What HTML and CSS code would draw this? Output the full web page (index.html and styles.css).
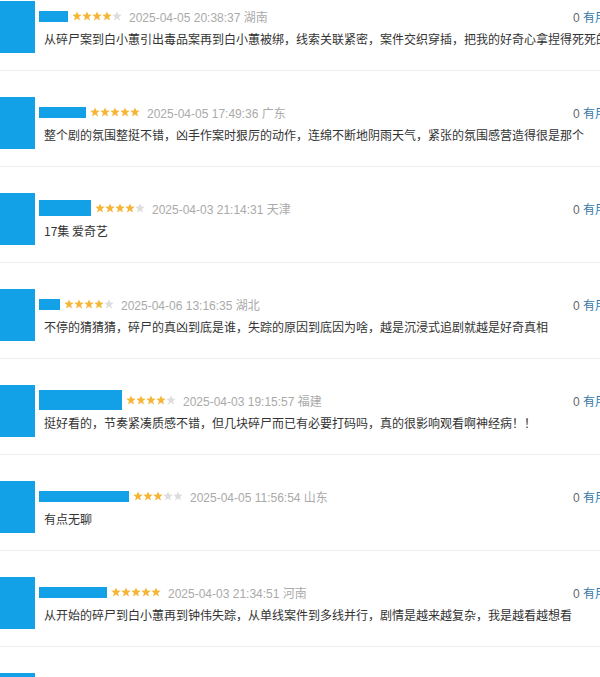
FILE: index.html
```html
<!DOCTYPE html>
<html lang="zh-CN">
<head>
    <meta charset="UTF-8">
    <meta name="viewport" content="width=device-width, initial-scale=1.0">
    <title>短评</title>
    <link rel="stylesheet" href="styles.css">
</head>
<body>
    <svg width="0" height="0" class="defs">
        <symbol id="star" viewBox="0 0 10 10">
            <polygon points="5,0.4 6.3,3.6 9.7,3.8 7,5.9 8,9.4 5,7.4 2,9.4 3,5.9 0.3,3.8 3.7,3.6"/>
        </symbol>
    </svg>

    <div class="comment-list">
        <div class="comment">
            <div class="avatar"></div>
            <div class="comment-body">
                <div class="meta">
                    <span class="name-box" style="width: 29px"></span>
                    <span class="stars">
                        <svg class="on"><use href="#star"/></svg><svg class="on"><use href="#star"/></svg><svg class="on"><use href="#star"/></svg><svg class="on"><use href="#star"/></svg><svg><use href="#star"/></svg>
                    </span>
                    <span class="time">2025-04-05 20:38:37 湖南</span>
                    <span class="votes">0 <a href="#">有用</a></span>
                </div>
                <p class="text">从碎尸案到白小蕙引出毒品案再到白小蕙被绑，线索关联紧密，案件交织穿插，把我的好奇心拿捏得死死的！</p>
            </div>
        </div>

        <div class="comment">
            <div class="avatar"></div>
            <div class="comment-body">
                <div class="meta">
                    <span class="name-box" style="width: 47px"></span>
                    <span class="stars">
                        <svg class="on"><use href="#star"/></svg><svg class="on"><use href="#star"/></svg><svg class="on"><use href="#star"/></svg><svg class="on"><use href="#star"/></svg><svg class="on"><use href="#star"/></svg>
                    </span>
                    <span class="time">2025-04-05 17:49:36 广东</span>
                    <span class="votes">0 <a href="#">有用</a></span>
                </div>
                <p class="text">整个剧的氛围整挺不错，凶手作案时狠厉的动作，连绵不断地阴雨天气，紧张的氛围感营造得很是那个</p>
            </div>
        </div>

        <div class="comment">
            <div class="avatar"></div>
            <div class="comment-body">
                <div class="meta">
                    <span class="name-box tall" style="width: 52px"></span>
                    <span class="stars">
                        <svg class="on"><use href="#star"/></svg><svg class="on"><use href="#star"/></svg><svg class="on"><use href="#star"/></svg><svg class="on"><use href="#star"/></svg><svg><use href="#star"/></svg>
                    </span>
                    <span class="time">2025-04-03 21:14:31 天津</span>
                    <span class="votes">0 <a href="#">有用</a></span>
                </div>
                <p class="text">17集 爱奇艺</p>
            </div>
        </div>

        <div class="comment">
            <div class="avatar"></div>
            <div class="comment-body">
                <div class="meta">
                    <span class="name-box" style="width: 21px"></span>
                    <span class="stars">
                        <svg class="on"><use href="#star"/></svg><svg class="on"><use href="#star"/></svg><svg class="on"><use href="#star"/></svg><svg class="on"><use href="#star"/></svg><svg><use href="#star"/></svg>
                    </span>
                    <span class="time">2025-04-06 13:16:35 湖北</span>
                    <span class="votes">0 <a href="#">有用</a></span>
                </div>
                <p class="text">不停的猜猜猜，碎尸的真凶到底是谁，失踪的原因到底因为啥，越是沉浸式追剧就越是好奇真相</p>
            </div>
        </div>

        <div class="comment">
            <div class="avatar"></div>
            <div class="comment-body">
                <div class="meta">
                    <span class="name-box taller" style="width: 83px"></span>
                    <span class="stars">
                        <svg class="on"><use href="#star"/></svg><svg class="on"><use href="#star"/></svg><svg class="on"><use href="#star"/></svg><svg class="on"><use href="#star"/></svg><svg><use href="#star"/></svg>
                    </span>
                    <span class="time">2025-04-03 19:15:57 福建</span>
                    <span class="votes">0 <a href="#">有用</a></span>
                </div>
                <p class="text">挺好看的，节奏紧凑质感不错，但几块碎尸而已有必要打码吗，真的很影响观看啊神经病！！</p>
            </div>
        </div>

        <div class="comment">
            <div class="avatar"></div>
            <div class="comment-body">
                <div class="meta">
                    <span class="name-box" style="width: 90px"></span>
                    <span class="stars">
                        <svg class="on"><use href="#star"/></svg><svg class="on"><use href="#star"/></svg><svg class="on"><use href="#star"/></svg><svg><use href="#star"/></svg><svg><use href="#star"/></svg>
                    </span>
                    <span class="time">2025-04-05 11:56:54 山东</span>
                    <span class="votes">0 <a href="#">有用</a></span>
                </div>
                <p class="text">有点无聊</p>
            </div>
        </div>

        <div class="comment">
            <div class="avatar"></div>
            <div class="comment-body">
                <div class="meta">
                    <span class="name-box" style="width: 68px"></span>
                    <span class="stars">
                        <svg class="on"><use href="#star"/></svg><svg class="on"><use href="#star"/></svg><svg class="on"><use href="#star"/></svg><svg class="on"><use href="#star"/></svg><svg class="on"><use href="#star"/></svg>
                    </span>
                    <span class="time">2025-04-03 21:34:51 河南</span>
                    <span class="votes">0 <a href="#">有用</a></span>
                </div>
                <p class="text">从开始的碎尸到白小蕙再到钟伟失踪，从单线案件到多线并行，剧情是越来越复杂，我是越看越想看</p>
            </div>
        </div>

        <div class="comment">
            <div class="avatar"></div>
            <div class="comment-body">
                <div class="meta">
                    <span class="name-box" style="width: 62px"></span>
                    <span class="stars">
                        <svg class="on"><use href="#star"/></svg><svg class="on"><use href="#star"/></svg><svg class="on"><use href="#star"/></svg><svg class="on"><use href="#star"/></svg><svg><use href="#star"/></svg>
                    </span>
                    <span class="time">2025-04-04 22:10:08 北京</span>
                    <span class="votes">0 <a href="#">有用</a></span>
                </div>
                <p class="text">剧情节奏很好</p>
            </div>
        </div>
    </div>
</body>
</html>
```

FILE: styles.css
```css
body {
    margin: 0;
    background-color: #fff;
    color: #333;
    font-family: "Liberation Sans", "Noto Sans CJK SC", sans-serif;
    font-size: 12px;
    overflow: hidden;
}

.defs {
    position: absolute;
}

.comment-list {
    width: 607px;
    margin-top: -25px;
}

.comment {
    display: flex;
    height: 96px;
    padding-top: 26px;
    box-sizing: border-box;
    border-bottom: 1px solid #eee;
}

.avatar {
    flex: none;
    width: 56px;
    height: 52px;
    margin-left: -21px;
    margin-right: 9px;
    background-color: #12a0e6;
}

.comment-body {
    flex: 1;
    min-width: 0;
    padding-top: 6px;
}

.meta {
    display: flex;
    align-items: center;
    height: 18px;
}

.name-box {
    height: 11px;
    margin-left: -5px;
    margin-right: 4px;
    background-color: #12a0e6;
}

.name-box.tall {
    height: 16px;
}

.name-box.taller {
    height: 20px;
}

.stars {
    display: flex;
    margin-right: 7px;
}

.stars svg {
    width: 10px;
    height: 10px;
    fill: #ddd;
}

.stars svg.on {
    fill: #f5b537;
}

.time {
    color: #aaa;
    font-size: 12px;
}

.votes {
    margin-left: auto;
    color: #666;
}

.votes a {
    color: #3377aa;
    text-decoration: none;
}

.text {
    margin: 5px 0 0;
    line-height: 18px;
    white-space: nowrap;
    overflow: hidden;
    font-family: "Noto Sans CJK SC", sans-serif;
}
```
